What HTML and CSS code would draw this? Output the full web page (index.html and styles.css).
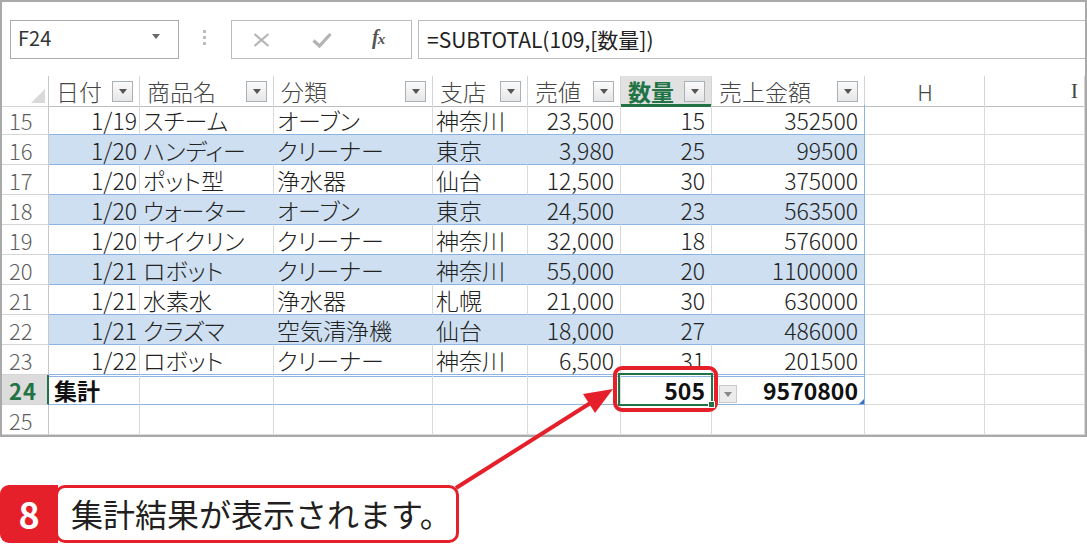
FILE: index.html
```html
<!DOCTYPE html>
<html lang="ja">
<head>
<meta charset="utf-8">
<title>集計</title>
<link rel="stylesheet" href="styles.css">
</head>
<body>
<div class="page">
  <div class="frame">
    <div class="fbar">
      <div class="namebox"><span>F24</span><span class="nb-arrow"></span></div>
      <div class="dots"><i></i><i></i><i></i></div>
      <div class="btns">
        <svg class="ic-x" width="17" height="14" viewBox="0 0 17 14"><path d="M1.5 1 L15.5 13 M15.5 1 L1.5 13" stroke="#b3b3b3" stroke-width="2" fill="none"/></svg>
        <svg class="ic-ok" width="20" height="16" viewBox="0 0 20 16"><path d="M1.5 8.5 L7.5 14 L18.5 2" stroke="#b3b3b3" stroke-width="3.2" fill="none"/></svg>
        <span class="fx">f<span class="fx-x">x</span></span>
      </div>
      <div class="formula">=SUBTOTAL(109,[数量])</div>
    </div>

    <div class="sheet">
      <div class="row head">
        <div class="c rh corner"><span class="tri"></span></div>
        <div class="c hc"><span>日付</span><span class="fb"></span></div>
        <div class="c hc"><span>商品名</span><span class="fb"></span></div>
        <div class="c hc"><span>分類</span><span class="fb"></span></div>
        <div class="c hc"><span>支店</span><span class="fb"></span></div>
        <div class="c hc"><span>売値</span><span class="fb"></span></div>
        <div class="c hc sel"><span>数量</span><span class="fb"></span></div>
        <div class="c hc"><span>売上金額</span><span class="fb"></span></div>
        <div class="c hc ctr">H</div>
        <div class="c hc ir">I</div>
      </div>

      <div class="row">
        <div class="c rh">15</div>
        <div class="c t ca">1/19</div><div class="c t">スチーム</div><div class="c t">オーブン</div><div class="c t">神奈川</div>
        <div class="c t num">23,500</div><div class="c t num">15</div><div class="c t num te">352500</div>
        <div class="c"></div><div class="c"></div>
      </div>
      <div class="row band">
        <div class="c rh">16</div>
        <div class="c t ca">1/20</div><div class="c t">ハンディー</div><div class="c t">クリーナー</div><div class="c t">東京</div>
        <div class="c t num">3,980</div><div class="c t num">25</div><div class="c t num te">99500</div>
        <div class="c"></div><div class="c"></div>
      </div>
      <div class="row">
        <div class="c rh">17</div>
        <div class="c t ca">1/20</div><div class="c t">ポット型</div><div class="c t">浄水器</div><div class="c t">仙台</div>
        <div class="c t num">12,500</div><div class="c t num">30</div><div class="c t num te">375000</div>
        <div class="c"></div><div class="c"></div>
      </div>
      <div class="row band">
        <div class="c rh">18</div>
        <div class="c t ca">1/20</div><div class="c t">ウォーター</div><div class="c t">オーブン</div><div class="c t">東京</div>
        <div class="c t num">24,500</div><div class="c t num">23</div><div class="c t num te">563500</div>
        <div class="c"></div><div class="c"></div>
      </div>
      <div class="row">
        <div class="c rh">19</div>
        <div class="c t ca">1/20</div><div class="c t">サイクリン</div><div class="c t">クリーナー</div><div class="c t">神奈川</div>
        <div class="c t num">32,000</div><div class="c t num">18</div><div class="c t num te">576000</div>
        <div class="c"></div><div class="c"></div>
      </div>
      <div class="row band">
        <div class="c rh">20</div>
        <div class="c t ca">1/21</div><div class="c t">ロボット</div><div class="c t">クリーナー</div><div class="c t">神奈川</div>
        <div class="c t num">55,000</div><div class="c t num">20</div><div class="c t num te">1100000</div>
        <div class="c"></div><div class="c"></div>
      </div>
      <div class="row">
        <div class="c rh">21</div>
        <div class="c t ca">1/21</div><div class="c t">水素水</div><div class="c t">浄水器</div><div class="c t">札幌</div>
        <div class="c t num">21,000</div><div class="c t num">30</div><div class="c t num te">630000</div>
        <div class="c"></div><div class="c"></div>
      </div>
      <div class="row band">
        <div class="c rh">22</div>
        <div class="c t ca">1/21</div><div class="c t">クラズマ</div><div class="c t">空気清浄機</div><div class="c t">仙台</div>
        <div class="c t num">18,000</div><div class="c t num">27</div><div class="c t num te">486000</div>
        <div class="c"></div><div class="c"></div>
      </div>
      <div class="row">
        <div class="c rh">23</div>
        <div class="c t ca">1/22</div><div class="c t">ロボット</div><div class="c t">クリーナー</div><div class="c t">神奈川</div>
        <div class="c t num">6,500</div><div class="c t num">31</div><div class="c t num te">201500</div>
        <div class="c"></div><div class="c"></div>
      </div>
      <div class="row total">
        <div class="c rh rh-sel">24</div>
        <div class="c t b lbl">集計</div><div class="c t"></div><div class="c t"></div><div class="c t"></div>
        <div class="c t"></div>
        <div class="c t num b active">505<span class="selbox"></span><span class="handle"></span></div>
        <div class="c t num b te">9570800<span class="dd"></span><span class="corner-blue"></span></div>
        <div class="c"></div><div class="c"></div>
      </div>
      <div class="row">
        <div class="c rh">25</div>
        <div class="c"></div><div class="c"></div><div class="c"></div><div class="c"></div>
        <div class="c"></div><div class="c"></div><div class="c"></div>
        <div class="c"></div><div class="c"></div>
      </div>
    </div>
  </div>

  <div class="callout">
    <div class="badge">8</div>
    <div class="cbox">集計結果が表示されます。</div>
  </div>

  <svg class="anno" width="1087" height="544" viewBox="0 0 1087 544">
    <rect x="615" y="368" width="101" height="42" rx="7" ry="7" fill="none" stroke="#e5202a" stroke-width="4"/>
    <line x1="456" y1="488" x2="592" y2="402" stroke="#e5202a" stroke-width="4"/>
    <polygon points="613,389 583,394 595,413" fill="#e5202a"/>
  </svg>
</div>
</body>
</html>
```

FILE: styles.css
```css
html, body {
  margin: 0;
  padding: 0;
  background: #fff;
}

body {
  font-family: "Noto Sans CJK JP", "Noto Sans", sans-serif;
}

.page {
  width: 1087px;
  height: 544px;
  position: relative;
  overflow: hidden;
}

.frame {
  height: 437px;
  border: 2px solid #a9a9a9;
  box-sizing: border-box;
  overflow: hidden;
}

/* ---------- formula bar ---------- */
.fbar {
  height: 74px;
  box-sizing: border-box;
  padding-top: 18px;
  display: flex;
  align-items: flex-start;
}

.namebox {
  margin-left: 8px;
  width: 169px;
  height: 39px;
  box-sizing: border-box;
  border: 1px solid #ababab;
  display: flex;
  align-items: center;
  justify-content: space-between;
  padding: 0 18px 3px 7px;
  font-size: 20px;
  line-height: 24px;
  color: #333;
}

.nb-arrow {
  width: 0;
  height: 0;
  border-left: 4px solid transparent;
  border-right: 4px solid transparent;
  border-top: 5px solid #6a6a6a;
  margin-top: -4px;
}

.dots {
  margin-left: 24px;
  padding-top: 10px;
  display: flex;
  flex-direction: column;
  gap: 3px;
}

.dots i {
  display: block;
  width: 3px;
  height: 3px;
  background: #bdbdbd;
}

.btns {
  margin-left: 25px;
  width: 181px;
  height: 39px;
  box-sizing: border-box;
  border: 1px solid #bcbcbc;
  display: flex;
  align-items: center;
}

.ic-x { margin-left: 21px; }
.ic-ok { margin-left: 42px; }

.fx {
  margin-left: 40px;
  font-family: "Liberation Serif", serif;
  font-style: italic;
  font-weight: bold;
  font-size: 20px;
  line-height: 24px;
  color: #555;
  letter-spacing: -1px;
  padding-bottom: 3px;
}

.fx-x {
  font-size: 15px;
}

.formula {
  margin-left: 6px;
  flex: 1;
  height: 39px;
  box-sizing: border-box;
  border: 1px solid #bcbcbc;
  border-right: none;
  display: flex;
  align-items: center;
  padding: 0 0 2px 8px;
  font-size: 21px;
  line-height: 26px;
  color: #222;
}

/* ---------- sheet ---------- */
.row {
  display: grid;
  grid-template-columns: 47px 91px 134px 159px 95px 93px 91px 153px 120px 1fr;
  height: 30px;
}

.row.head {
  height: 29px;
}

.c {
  position: relative;
  box-sizing: border-box;
  border-right: 1px solid #dadada;
  border-bottom: 1px solid #dadada;
  display: flex;
  align-items: center;
  padding: 0 3px;
  white-space: nowrap;
  font-size: 23px;
  line-height: 26px;
  font-weight: 300;
  color: #222;
  font-feature-settings: "palt" 1;
}

/* row header */
.rh {
  padding-left: 7px;
  color: #5e5e5e;
  font-size: 22px;
  border-right-color: #c8c8c8;
  border-bottom-color: #d6d6d6;
}

.rh-sel {
  background: #dcdcdc;
  color: #217346;
  font-weight: bold;
  border-right: 2px solid #217346;
  letter-spacing: 1px;
}

.corner {
  justify-content: flex-end;
  align-items: flex-end;
  padding: 0 3px 3px 0;
}

.tri {
  width: 0;
  height: 0;
  border-left: 14px solid transparent;
  border-bottom: 14px solid #d9d9d9;
}

/* column headers */
.hc {
  justify-content: space-between;
  padding: 0 6px 0 7px;
  color: #454545;
  border-right-color: #d4d4d4;
  border-bottom: 1px solid #bdbdbd;
}

.hc.sel {
  background: #e1e1e1;
  color: #217346;
  font-weight: bold;
  border-bottom: 3px solid #217346;
  padding-top: 2px;
}

.hc.ctr {
  justify-content: center;
  font-size: 22px;
}

.hc.ir {
  justify-content: flex-end;
  padding-right: 6px;
  font-family: "Liberation Serif", serif;
  font-size: 22px;
}

.fb {
  width: 21px;
  height: 21px;
  box-sizing: border-box;
  border: 1px solid #a9b0b8;
  background: linear-gradient(#fbfbfb, #e6e6e6);
  display: flex;
  align-items: center;
  justify-content: center;
}

.fb::after {
  content: "";
  width: 0;
  height: 0;
  border-left: 4px solid transparent;
  border-right: 4px solid transparent;
  border-top: 5px solid #555;
}

/* table cells */
.t {
  border-bottom-color: #8db3e2;
}

.te {
  border-right-color: #8db3e2;
}

.band .t {
  background: #cddff0;
  border-right-color: transparent;
}

.band .te {
  border-right-color: #8db3e2;
}

.ca {
  justify-content: flex-end;
  padding-right: 2px;
}

.num {
  justify-content: flex-end;
  padding-right: 6px;
}

.total .t {
  box-shadow: inset 0 1px 0 #fff, inset 0 2px 0 #8db3e2;
}

.b {
  font-weight: bold;
  color: #111;
}

.lbl {
  padding-left: 5px;
}

.selbox {
  position: absolute;
  left: -3px;
  top: -2px;
  right: -2px;
  bottom: -2px;
  border: 2px solid #217346;
  z-index: 2;
}

.handle {
  position: absolute;
  right: -4px;
  bottom: -4px;
  width: 5px;
  height: 5px;
  background: #217346;
  border: 1px solid #fff;
  z-index: 3;
}

.dd {
  position: absolute;
  left: 7px;
  top: 10px;
  width: 18px;
  height: 18px;
  box-sizing: border-box;
  border: 1px solid #cacaca;
  background: #ececec;
  display: flex;
  align-items: center;
  justify-content: center;
  z-index: 2;
}

.dd::after {
  content: "";
  width: 0;
  height: 0;
  border-left: 4px solid transparent;
  border-right: 4px solid transparent;
  border-top: 5px solid #8a8a8a;
}

.corner-blue {
  position: absolute;
  right: 0;
  bottom: 0;
  width: 0;
  height: 0;
  border-left: 5px solid transparent;
  border-bottom: 5px solid #3d6fc3;
}

/* ---------- callout ---------- */
.callout {
  display: flex;
  margin-top: 48px;
  height: 58px;
}

.badge {
  width: 58px;
  background: #e5202a;
  color: #fff;
  font-weight: bold;
  font-size: 36px;
  line-height: 40px;
  display: flex;
  align-items: center;
  justify-content: center;
  border-radius: 9px 0 0 9px;
  padding-bottom: 2px;
  box-sizing: border-box;
}

.cbox {
  margin-left: -3px;
  width: 404px;
  box-sizing: border-box;
  border: 3.5px solid #e5202a;
  border-radius: 10px;
  background: #fff;
  display: flex;
  align-items: center;
  padding: 0 0 2px 13px;
  font-size: 32px;
  line-height: 40px;
  color: #231f20;
}

.anno {
  position: absolute;
  left: 0;
  top: 0;
  pointer-events: none;
}
```
